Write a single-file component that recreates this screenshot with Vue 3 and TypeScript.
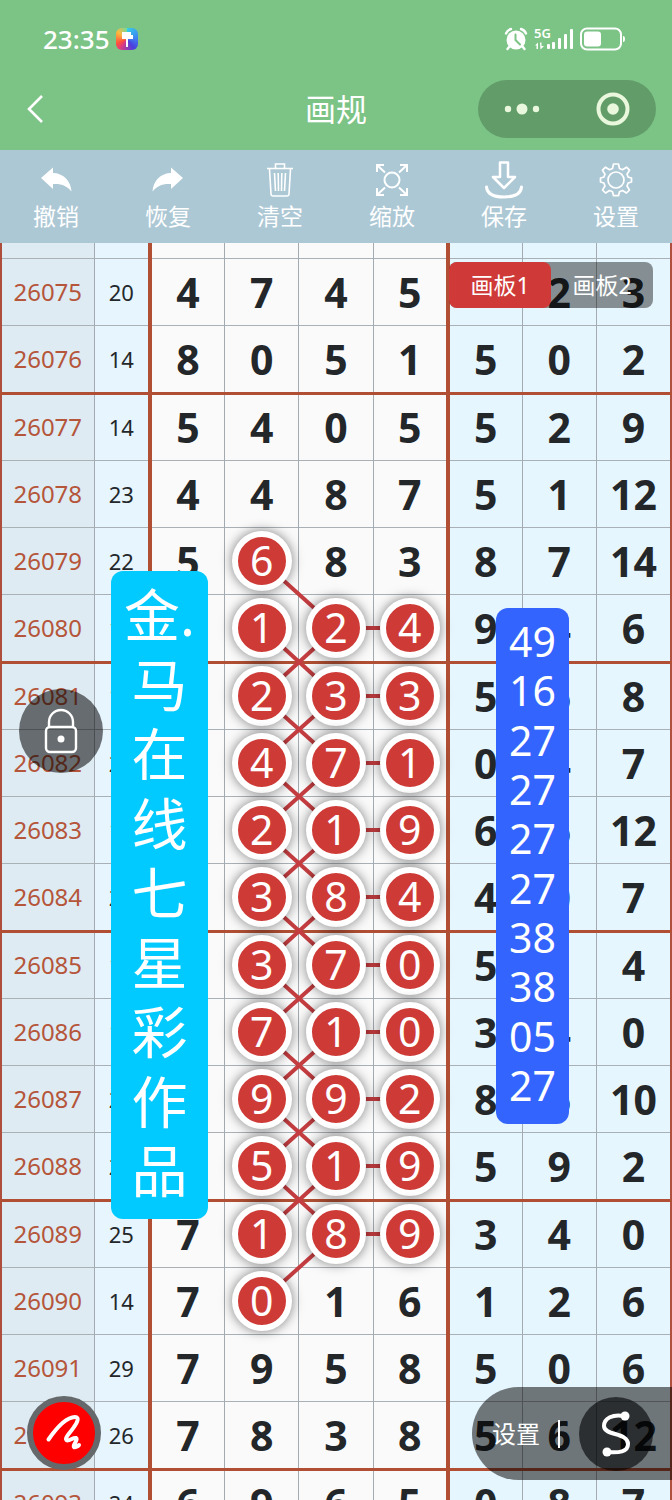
<script setup lang="ts">
import { ref } from 'vue'

interface Row {
  id: string
  sum: string
  digits: string[]
  tails: string[]
}

const HEAD_ROW = 15
const ROW = 67
const THICK_ROW = 68

const source: [string, string, string, string][] = [
  ['26075', '20', '4745', '5 2 3'],
  ['26076', '14', '8051', '5 0 2'],
  ['26077', '14', '5405', '5 2 9'],
  ['26078', '23', '4487', '5 1 12'],
  ['26079', '22', '5683', '8 7 14'],
  ['26080', '14', ' 124', '9 4 6'],
  ['26081', '15', ' 233', '5 6 8'],
  ['26082', '21', ' 471', '0 4 7'],
  ['26083', '16', ' 219', '6 6 12'],
  ['26084', '20', ' 384', '4 0 7'],
  ['26085', '15', ' 370', '5 1 4'],
  ['26086', '11', ' 710', '3 4 0'],
  ['26087', '28', ' 992', '8 6 10'],
  ['26088', '22', ' 519', '5 9 2'],
  ['26089', '25', '7189', '3 4 0'],
  ['26090', '14', '7016', '1 2 6'],
  ['26091', '29', '7958', '5 0 6'],
  ['26092', '26', '7838', '5 6 12'],
  ['26093', '24', '6965', '0 8 7'],
]

const rows: Row[] = source.map(([id, sum, d, t]) => ({
  id,
  sum,
  digits: d.split('').map((c) => c.trim()),
  tails: t.split(' '),
}))

const FIRST = 4
const LAST = 15

function isThick(i: number): boolean {
  return i % 4 === 1
}

function isMarked(i: number, col: number): boolean {
  if (col === 1) return i >= FIRST && i <= LAST
  if (col === 2 || col === 3) return i > FIRST && i < LAST
  return false
}

function rowCenter(i: number): number {
  let y = HEAD_ROW
  for (let k = 0; k < i; k++) y += isThick(k) ? THICK_ROW : ROW
  return y + 34
}

function colCenter(col: number): string {
  return `${((col + 0.5) * 100) / 7}%`
}

interface Link {
  x1: string
  y1: number
  x2: string
  y2: number
}

function link(c1: number, r1: number, c2: number, r2: number): Link {
  return { x1: colCenter(c1), y1: rowCenter(r1), x2: colCenter(c2), y2: rowCenter(r2) }
}

const links: Link[] = []
for (let i = FIRST; i < LAST; i++) {
  if (i + 1 < LAST) links.push(link(1, i, 2, i + 1))
  if (i > FIRST) {
    links.push(link(2, i, 1, i + 1))
    links.push(link(2, i, 3, i))
  }
}

const banner = ['金.', '马', '在', '线', '七', '星', '彩', '作', '品']
const picks = ['49', '16', '27', '27', '27', '27', '38', '38', '05', '27']
const boards = ['画板1', '画板2']
const activeBoard = ref(0)
</script>

<template>
  <div class="page">
    <header class="top">
      <div class="status">
        <div class="status-left">
          <span class="clock">23:35</span>
          <span class="app-dot">
            <svg width="22" height="22" viewBox="0 0 22 22"><path d="M6 4h9v3h2v4h-5v8h-2v-8H6z" fill="#fff" /></svg>
          </span>
        </div>
        <div class="status-right">
          <svg width="24" height="24" viewBox="0 0 24 24">
            <circle cx="12" cy="13" r="9.500" fill="#fff" />
            <path d="M2 6.500Q3.500 3 7 2M22 6.500Q20.500 3 17 2M5.500 19.500 3.500 22M18.500 19.500l2 2.500" stroke="#fff" stroke-width="2.400" fill="none" stroke-linecap="round" />
            <path d="M11.500 7.500V13l4.500 4.500" stroke="#7cc386" stroke-width="2" fill="none" stroke-linecap="round" />
          </svg>
          <div class="signal">
            <span class="net">5G</span>
            <svg width="40" height="22" viewBox="0 0 40 22" fill="#fff">
              <path d="M1 17.500 4 14.500V21H2.500v-3.500zM6 14.500h1.500V18H10l-3.500 3.500z" />
              <rect x="13" y="16" width="3" height="5" rx="1" />
              <rect x="18" y="14" width="3" height="7" rx="1" />
              <rect x="24" y="10" width="3" height="11" rx="1" />
              <rect x="30" y="6" width="3" height="15" rx="1" />
              <rect x="36" y="1" width="3" height="20" rx="1" />
            </svg>
          </div>
          <svg width="46" height="24" viewBox="0 0 46 24">
            <rect x="1" y="1.500" width="40" height="21" rx="6" fill="none" stroke="#fff" stroke-width="2" />
            <rect x="4" y="4.500" width="17" height="15" rx="3" fill="#fff" />
            <path d="M43 9q2 0 2 3t-2 3z" fill="#fff" />
          </svg>
        </div>
      </div>
      <nav class="nav">
        <button class="back" aria-label="返回">
          <svg width="20" height="30" viewBox="0 0 20 30"><path d="M16 2 3 15l13 13" fill="none" stroke="#fff" stroke-width="2.600" /></svg>
        </button>
        <h1>画规</h1>
        <div class="capsule">
          <button aria-label="更多">
            <svg width="40" height="34" viewBox="0 0 40 34" fill="#e9f8dc">
              <circle cx="6" cy="17" r="3.200" /><circle cx="20" cy="17" r="5.500" /><circle cx="34" cy="17" r="3.200" />
            </svg>
          </button>
          <button aria-label="关闭">
            <svg width="34" height="34" viewBox="0 0 34 34">
              <circle cx="17" cy="17" r="14.500" fill="none" stroke="#e9f8dc" stroke-width="4" /><circle cx="17" cy="17" r="5.800" fill="#e9f8dc" />
            </svg>
          </button>
        </div>
      </nav>
    </header>

    <div class="tools">
      <button>
        <svg width="40" height="40" viewBox="0 0 40 40"><path d="M5 18 17 7.500V13c10 0 18 8 18.500 18.500C31 26 26 23.500 17 24v5z" fill="#fff" /></svg>
        <span>撤销</span>
      </button>
      <button>
        <svg width="40" height="40" viewBox="0 0 40 40"><path d="M35 18 23 7.500V13C13 13 5 21 4.500 31.500 9 26 14 23.500 23 24v5z" fill="#fff" /></svg>
        <span>恢复</span>
      </button>
      <button>
        <svg width="40" height="40" viewBox="0 0 40 40" fill="none" stroke="#fff" stroke-width="1.600">
          <path d="M7 8.500h26M15.500 8V4h9v4M9.500 9l1.500 25q.200 2 2 2h14q1.800 0 2-2L30.500 9M14.500 13l1 18M18.200 13l.300 18M21.800 13l-.300 18M25.500 13l-1 18" />
        </svg>
        <span>清空</span>
      </button>
      <button>
        <svg width="40" height="40" viewBox="0 0 40 40" fill="none" stroke="#fff" stroke-width="2">
          <circle cx="20" cy="20" r="7.500" />
          <path d="M5 12V5h7M5 5l8 7.500M28 5h7v7M35 5l-8 7.500M5 28v7h7M5 35l8-7.500M28 35h7v-7M35 35l-8-7.500" />
        </svg>
        <span>缩放</span>
      </button>
      <button>
        <svg width="40" height="40" viewBox="0 0 40 40" fill="none" stroke="#fff">
          <path d="M16 2.500h8V17h7L20 28 9 17h7z" stroke-width="2.500" stroke-linejoin="round" />
          <path d="M2.500 27q1 10 17.500 10t17.500-10" stroke-width="3" stroke-linecap="round" />
        </svg>
        <span>保存</span>
      </button>
      <button>
        <svg width="40" height="40" viewBox="0 0 40 40" fill="none" stroke="#fff" stroke-width="1.700" stroke-linejoin="round">
          <circle cx="20" cy="20" r="8" />
          <path d="M17.500 4h5l1 4.500 3 1.200 4-2.500 3 3-2.500 4 1.200 3 3.300.800v4l-3.300 1-1.200 3 2.500 4-3 3-4-2.500-3 1.200-1 4h-5l-1-4-3-1.200-4 2.500-3-3 2.500-4-1.200-3-3.300-1v-4l3.300-.800 1.200-3-2.500-4 3-3 4 2.500 3-1.200z" />
        </svg>
        <span>设置</span>
      </button>
    </div>

    <main class="board">
      <table>
        <colgroup>
          <col class="c-id" />
          <col class="c-sum" />
          <col v-for="n in 7" :key="n" />
        </colgroup>
        <tbody>
          <tr class="stub">
            <td class="id"></td>
            <td class="sum"></td>
            <td v-for="n in 4" :key="n" :class="['digit', { edge: n === 1 }]"></td>
            <td v-for="n in 3" :key="n + 4" :class="['tail', { edge: n === 1 }]"></td>
          </tr>
          <tr v-for="(row, i) in rows" :key="row.id" :class="{ thick: isThick(i) }">
            <td class="id">{{ row.id }}</td>
            <td class="sum">{{ row.sum }}</td>
            <td v-for="(d, c) in row.digits" :key="c" :class="['digit', { edge: c === 0 }]">
              <span v-if="isMarked(i, c)" class="ball">{{ d }}</span>
              <template v-else>{{ d }}</template>
            </td>
            <td v-for="(t, c) in row.tails" :key="c + 4" :class="['tail', { edge: c === 0 }]">{{ t }}</td>
          </tr>
        </tbody>
      </table>

      <svg class="links">
        <line v-for="(l, i) in links" :key="i" :x1="l.x1" :y1="l.y1" :x2="l.x2" :y2="l.y2" />
      </svg>

      <div class="note banner">
        <span v-for="ch in banner" :key="ch">{{ ch }}</span>
      </div>
      <div class="note picks">
        <span v-for="(p, i) in picks" :key="i">{{ p }}</span>
      </div>

      <div class="tabs">
        <button v-for="(b, i) in boards" :key="b" :class="{ on: activeBoard === i }" @click="activeBoard = i">{{ b }}</button>
      </div>

      <button class="lock" aria-label="锁定">
        <svg width="36" height="46" viewBox="0 0 36 46" fill="none" stroke="#fff" stroke-width="2.400">
          <rect x="3" y="19" width="30" height="25" rx="4" />
          <path d="M6 19v-5a12 12 0 0 1 24 0v5" />
          <circle cx="18" cy="31" r="3.500" fill="#fff" stroke="none" />
        </svg>
      </button>

      <button class="pen" aria-label="画笔">
        <svg width="62" height="62" viewBox="0 0 62 62" fill="none" stroke="#fff" stroke-width="4" stroke-linecap="round" stroke-linejoin="round">
          <path d="M15.500 37.500C22 28 32 15.500 42 15c5 0 2 6-1 10-4 6-8 9-8 12 1 4 7-2 10-1 3 2-4 7-2 9 1 1 4-1 5-2" />
        </svg>
      </button>

      <div class="dock">
        <button class="dock-set">设置</button>
        <span class="bar"></span>
        <button class="curve" aria-label="曲线">
          <svg width="40" height="50" viewBox="0 0 40 50" fill="none" stroke="#fff" stroke-width="4" stroke-linecap="round">
            <path d="M28 7C17 5 8 9 8 17c0 10 24 6 24 18 0 8-9 9-21 8" />
            <circle cx="29" cy="7" r="4.500" fill="#fff" stroke="none" />
            <circle cx="11" cy="43" r="4.500" fill="#fff" stroke="none" />
          </svg>
        </button>
      </div>
    </main>
  </div>
</template>

<style>
body {
  margin: 0;
}
</style>

<style scoped>
.page {
  display: flex;
  flex-direction: column;
  height: 100vh;
  overflow: hidden;
  background: #fff;
  color: #fff;
  font-family: 'Noto Sans', 'Noto Sans CJK SC', sans-serif;
}

button {
  margin: 0;
  padding: 0;
  border: 0;
  background: none;
  color: inherit;
  font: inherit;
  cursor: pointer;
}

svg {
  display: block;
}

.top {
  background: #7cc386;
}

.status {
  display: flex;
  justify-content: space-between;
  align-items: center;
  height: 78px;
  padding: 0 46px 0 43px;
  box-sizing: border-box;
}

.status-left,
.status-right {
  display: flex;
  align-items: center;
}

.status-left {
  gap: 6px;
}

.status-right {
  gap: 6px;
}

.clock {
  font-size: 26px;
  line-height: 32px;
  font-weight: 500;
}

.app-dot {
  border-radius: 6px;
  overflow: hidden;
  background: conic-gradient(from 0deg, #35d0e8, #3f7df0 25%, #4a3fe0 40%, #e03a80 60%, #ff4f3c 68%, #ffb83c 85%, #6fdc9c);
}

.signal {
  position: relative;
}

.net {
  position: absolute;
  top: -2px;
  left: 0;
  font-size: 13px;
  line-height: 14px;
  font-weight: 600;
}

.nav {
  display: grid;
  grid-template-columns: 1fr auto 1fr;
  align-items: center;
  height: 72px;
  padding: 0 16px 10px;
  box-sizing: border-box;
}

.nav h1 {
  margin: 0;
  font-size: 31px;
  line-height: 40px;
  font-weight: 400;
}

.back {
  justify-self: start;
  padding-left: 10px;
}

.capsule {
  justify-self: end;
  display: flex;
  align-items: center;
  justify-content: space-between;
  width: 178px;
  height: 58px;
  padding: 0 26px 0 24px;
  box-sizing: border-box;
  border-radius: 29px;
  background: #619c69;
}

.tools {
  display: grid;
  grid-template-columns: repeat(6, 1fr);
  height: 93px;
  background: #adc8d5;
}

.tools button {
  display: flex;
  flex-direction: column;
  align-items: center;
  padding-top: 10px;
  font-size: 23px;
  line-height: 32px;
}

.board {
  position: relative;
  flex: 1;
  min-height: 0;
  overflow: hidden;
}

table {
  width: 100%;
  table-layout: fixed;
  border-collapse: collapse;
  border-left: 2px solid #ae4f3d;
  border-right: 2px solid #ae4f3d;
  color: #23272a;
}

.c-id {
  width: 93px;
}

.c-sum {
  width: 56px;
}

tr {
  height: 67px;
  border-bottom: 1px solid #a9b1b6;
}

tr.stub {
  height: 15px;
}

tr.thick {
  height: 68px;
  border-bottom: 3px solid #b04f33;
}

td {
  padding: 0;
  text-align: center;
  border-right: 1px solid #a4abb0;
}

td:last-child {
  border-right: 2px solid #b04f3d;
}

td.edge {
  border-left: 4px solid #b04f33;
}

.id {
  background: #deebf2;
  color: #b5553a;
  font-size: 24px;
  line-height: 32px;
}

.sum {
  background: #e6f5fe;
  font-size: 22px;
  line-height: 32px;
}

.digit,
.tail {
  font-size: 41px;
  line-height: 58px;
  font-weight: 700;
}

.digit {
  background: #fafafa;
}

.tail {
  background: #e6f6fe;
}

.ball {
  position: relative;
  z-index: 2;
  display: block;
  width: 48px;
  height: 48px;
  margin: 0 auto;
  border: 6px solid #fff;
  border-radius: 50%;
  background: #ce3b37;
  box-shadow: 0 0 12px rgba(0, 0, 0, 0.5);
  color: #fff;
  font-weight: 400;
  line-height: 46px;
}

.links {
  position: absolute;
  z-index: 1;
  top: 0;
  left: 150px;
  width: calc(100% - 150px);
  height: 100%;
}

.links line {
  stroke: #c43d40;
  stroke-width: 4px;
}

.note {
  position: absolute;
  z-index: 3;
  display: flex;
  flex-direction: column;
  justify-content: space-between;
  box-sizing: border-box;
  text-align: center;
}

.banner {
  top: 328px;
  left: 111px;
  width: 97px;
  height: 648px;
  padding: 9px 0 14px;
  border-radius: 12px;
  background: #00caff;
  font-size: 56px;
  line-height: 69px;
}

.picks {
  top: 365px;
  left: 496px;
  width: 73px;
  height: 516px;
  padding: 9px 0 14px;
  border-radius: 12px;
  background: #3364fe;
  font-size: 41px;
  line-height: 49px;
}

.tabs {
  position: absolute;
  z-index: 3;
  top: 19px;
  right: 19px;
  display: flex;
  border-radius: 8px;
  background: rgba(0, 0, 0, 0.42);
}

.tabs button {
  width: 102px;
  height: 46px;
  border-radius: 8px;
  font-size: 23px;
  line-height: 46px;
}

.tabs .on {
  background: #cf3a38;
}

.lock,
.pen,
.curve {
  display: flex;
  align-items: center;
  justify-content: center;
  border-radius: 50%;
}

.lock {
  position: absolute;
  z-index: 4;
  top: 446px;
  left: 19px;
  width: 84px;
  height: 84px;
  background: rgba(0, 0, 0, 0.54);
}

.pen {
  position: absolute;
  z-index: 4;
  bottom: 30px;
  left: 27px;
  width: 74px;
  height: 74px;
  box-sizing: border-box;
  border: 6px solid #66696b;
  background: #fe0000;
}

.dock {
  position: absolute;
  z-index: 4;
  right: 0;
  bottom: 20px;
  display: flex;
  align-items: center;
  height: 93px;
  padding: 0 19px 0 20px;
  border-radius: 47px 0 0 47px;
  background: rgba(0, 0, 0, 0.52);
}

.dock-set {
  font-size: 24px;
  line-height: 32px;
}

.bar {
  width: 2px;
  height: 28px;
  margin: 0 19px 0 18px;
  background: #fff;
}

.curve {
  width: 74px;
  height: 74px;
  background: rgba(0, 0, 0, 0.6);
}
</style>
